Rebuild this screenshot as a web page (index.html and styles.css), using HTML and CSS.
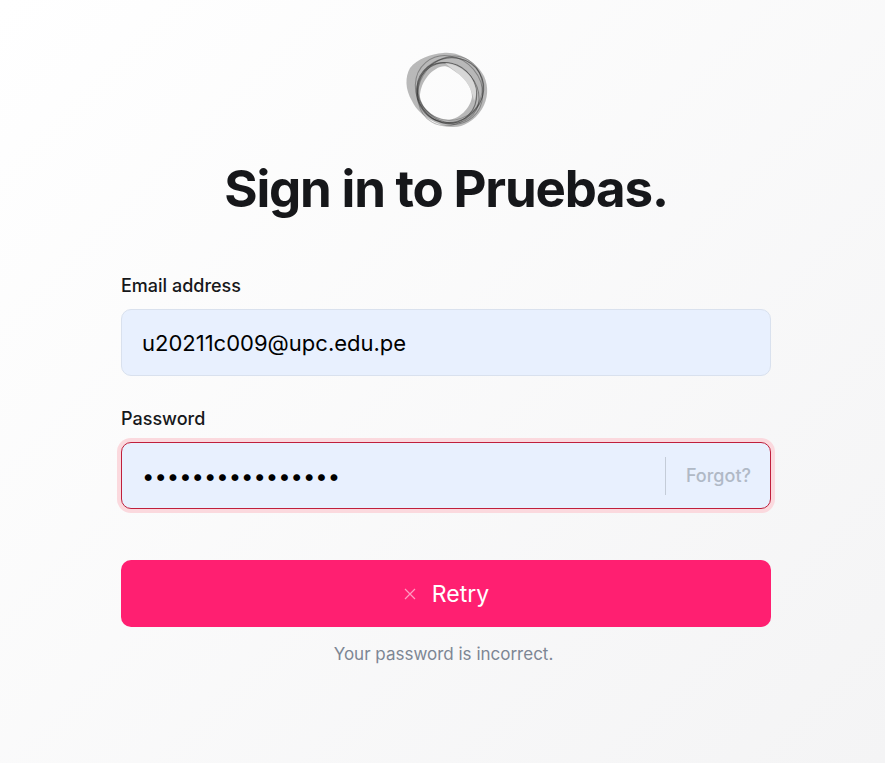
FILE: index.html
```html
<!DOCTYPE html>
<html lang="en">
<head>
    <meta charset="UTF-8">
    <meta name="viewport" content="width=device-width, initial-scale=1.0">
    <title>Sign in to Pruebas</title>
    <link rel="stylesheet" href="styles.css">
</head>
<body>
    <main class="signin">
        <svg class="logo" width="84" height="78" viewBox="0 0 84 78" fill="none" stroke="#1f1f1f">
            <path class="logo-band" d="M38 2 C55 0 72 12 79 25 C84 36 83 48 77 58 C69 71 56 77 47 76 C33 75 14 65 7 50 C0 38 0 26 5 17 C12 8 26 3 38 2 Z M35 16 C24 20 15 33 15 46 C17 58 31 69 43 69 C54 68 65 58 67 46 C67 38 62 31 58 27 C53 22 48 19 45 17 C42 15 38 15 35 16 Z"/>
            <ellipse cx="45" cy="39" rx="34" ry="32" transform="rotate(-30 45 39)" stroke-opacity="0.4" stroke-width="1"/>
            <ellipse cx="44" cy="39" rx="32" ry="36" transform="rotate(-40 44 39)" stroke-opacity="0.35" stroke-width="1"/>
            <ellipse cx="46" cy="38" rx="33" ry="31" transform="rotate(-20 46 38)" stroke-opacity="0.3" stroke-width="1"/>
            <ellipse cx="42" cy="42" rx="29" ry="31" transform="rotate(-35 42 42)" stroke-opacity="0.5" stroke-width="1.1"/>
            <ellipse cx="43" cy="42" rx="28" ry="33" transform="rotate(-50 43 42)" stroke-opacity="0.4" stroke-width="1"/>
            <ellipse cx="45" cy="40" rx="36" ry="31" transform="rotate(-60 45 40)" stroke-opacity="0.3" stroke-width="1"/>
            <path class="logo-shine" d="M40 12 C50 12 60 18 66 26 C71 34 73 42 69 50 C67 38 62 31 58 27 C53 22 46 17 40 12 Z"/>
        </svg>
        <h1>Sign in to Pruebas.</h1>
        <form class="form">
            <div class="field">
                <label for="email">Email address</label>
                <input class="input" type="text" id="email" value="u20211c009@upc.edu.pe">
            </div>
            <div class="field">
                <label for="password">Password</label>
                <div class="password-box">
                    <input class="password-input" type="password" id="password" value="abcdefghijklmnop">
                    <a class="forgot" href="#">Forgot?</a>
                </div>
            </div>
            <button class="retry" type="button">
                <svg width="14" height="14" viewBox="0 0 14 14" stroke="#ff9cc2" stroke-width="1.2" fill="none"><path d="M2 2 L12 12 M12 2 L2 12"/></svg>
                <span>Retry</span>
            </button>
            <p class="message">Your password is incorrect.</p>
        </form>
    </main>
</body>
</html>
```

FILE: styles.css
```css
* {
    box-sizing: border-box;
}

html, body {
    height: 100%;
}

body {
    margin: 0;
    padding: 0 114px 0 121px;
    overflow: hidden;
    font-family: Inter, "Liberation Sans", sans-serif;
    background: linear-gradient(135deg, #ffffff 0%, #f4f4f5 100%);
    color: #16171a;
}

.signin {
    display: flex;
    flex-direction: column;
    align-items: center;
    padding-top: 51px;
}

.logo {
    display: block;
    margin-left: 2px;
}

.logo-band {
    fill: #8c8c8c;
    fill-opacity: 0.6;
    fill-rule: evenodd;
    stroke: none;
}

.logo-shine {
    fill: #e4e4e4;
    fill-opacity: 0.7;
    stroke: none;
}

h1 {
    margin: 25px 0 0;
    font-size: 51px;
    line-height: 70px;
    font-weight: 700;
    letter-spacing: -1.2px;
    white-space: nowrap;
}

.form {
    width: 100%;
    margin-top: 50px;
}

.field {
    margin-bottom: 31px;
}

.field label {
    display: block;
    font-size: 18px;
    line-height: 24px;
    font-weight: 500;
    margin-bottom: 11px;
}

.input,
.password-box {
    display: block;
    width: 100%;
    height: 67px;
    background-color: #e8f0fe;
    border: 1px solid #d9e1ee;
    border-radius: 10px;
}

.input {
    padding: 0 20px;
    font-family: inherit;
    font-size: 22px;
    color: #000000;
    outline: none;
}

.password-box {
    display: flex;
    align-items: center;
    border-color: #c01f3c;
    box-shadow: 0 0 0 4px #fbd9de;
}

.password-input {
    flex: 1;
    min-width: 0;
    height: 100%;
    padding: 0 20px;
    border: none;
    outline: none;
    background: transparent;
    font-family: inherit;
    font-size: 22px;
    color: #000000;
}

.forgot {
    display: flex;
    align-items: center;
    height: 38px;
    padding: 0 19px 0 20px;
    border-left: 1px solid #c4ccd8;
    font-size: 18px;
    font-weight: 500;
    color: #b0b9c6;
    text-decoration: none;
}

.retry {
    display: flex;
    align-items: center;
    justify-content: center;
    gap: 15px;
    width: 100%;
    height: 67px;
    margin-top: 51px;
    border: none;
    border-radius: 10px;
    background-color: #ff1f71;
    color: #ffffff;
    font-family: inherit;
    font-size: 23px;
    cursor: pointer;
}

.message {
    margin: 15px 5px 0 0;
    text-align: center;
    font-size: 17px;
    line-height: 24px;
    color: #7d8694;
}
```
